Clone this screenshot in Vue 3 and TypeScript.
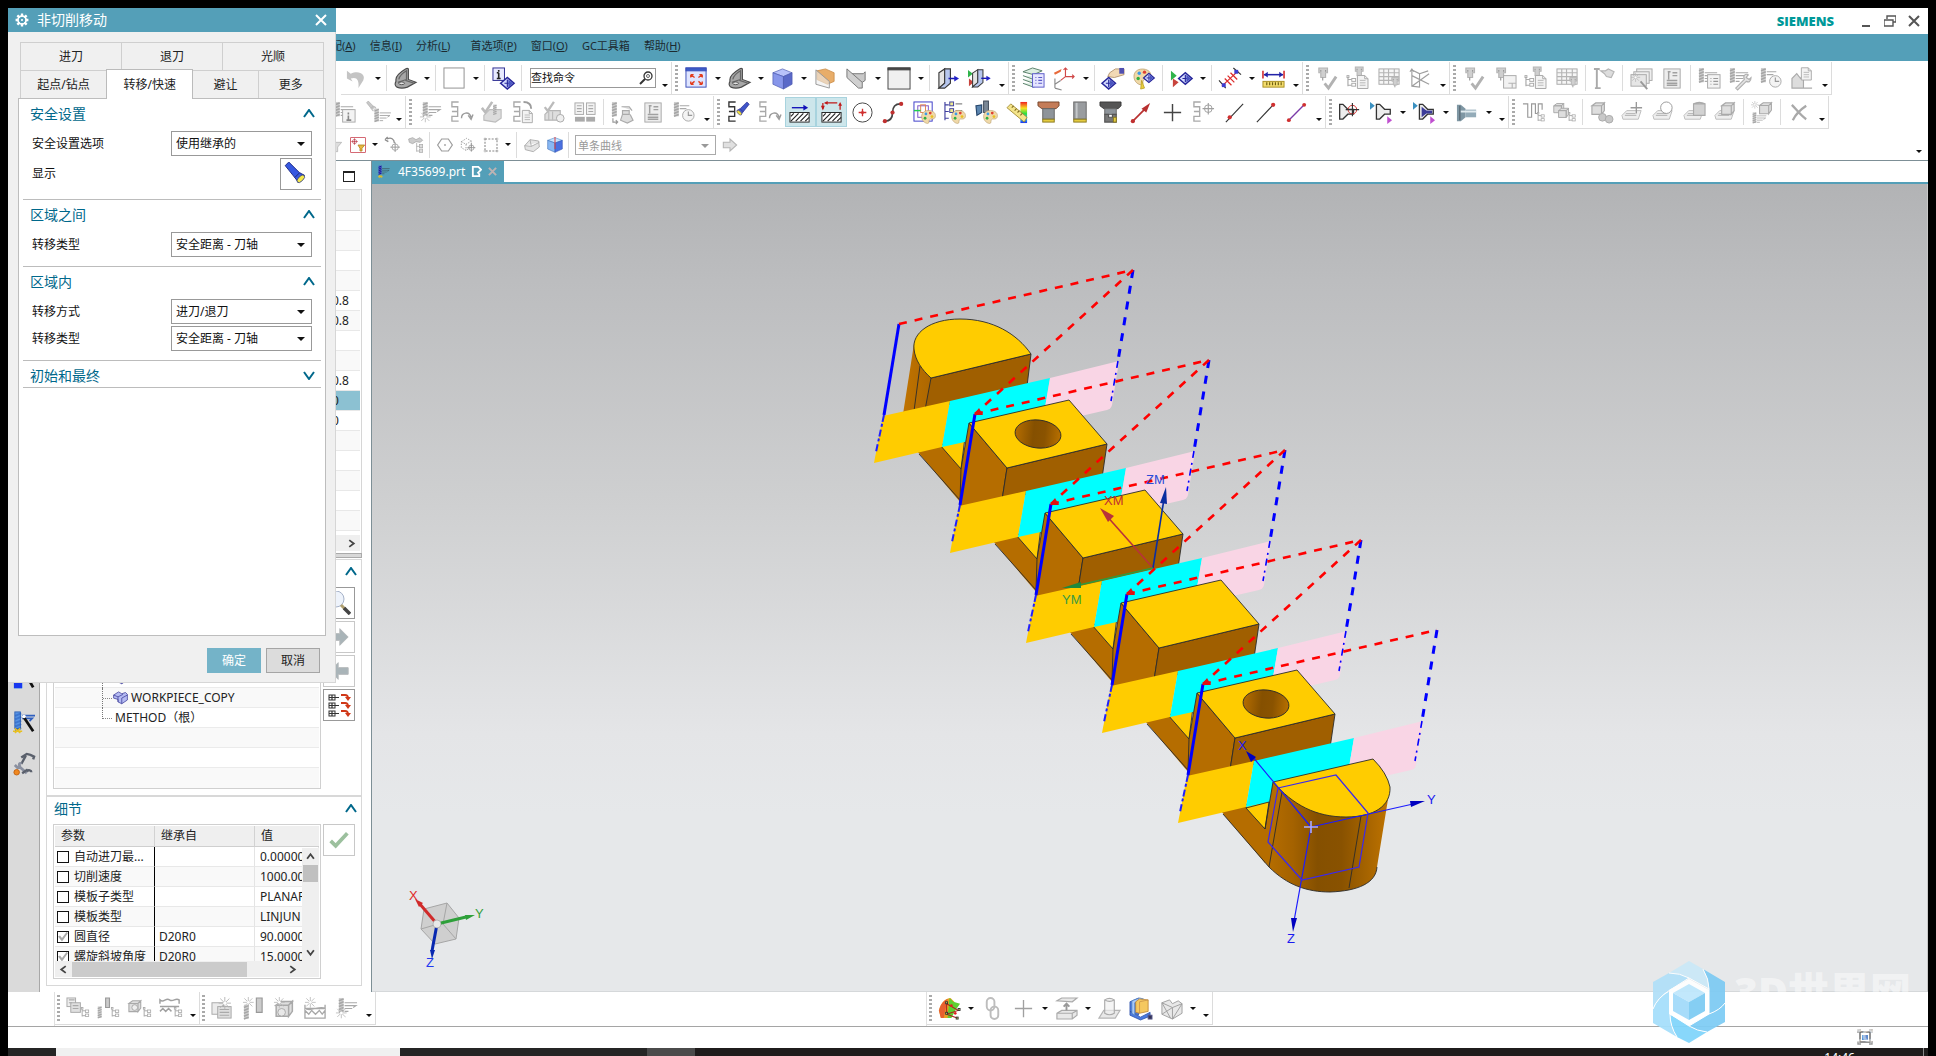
<script setup lang="ts">
import { ref } from 'vue'

type Item = string

// --- SVG building blocks for the toolbar glyphs (24 x 24 grid) ---
const G = '#a9a9a9'
const L = '#dcdcdc'
const p = (d: string, s = G, f = 'none', w = 1.2) =>
  `<path d="${d}" stroke="${s}" fill="${f}" stroke-width="${w}"/>`
const r = (x: number, y: number, w: number, h: number, f = L, s = G) =>
  `<rect x="${x}" y="${y}" width="${w}" height="${h}" fill="${f}" stroke="${s}"/>`
const c = (x: number, y: number, q: number, f = 'none', s = G) =>
  `<circle cx="${x}" cy="${y}" r="${q}" fill="${f}" stroke="${s}"/>`
const at = (x: number, y: number, k: number, m: string) =>
  `<g transform="translate(${x} ${y}) scale(${k})">${m}</g>`

const mill = (a = '#a6a6a6', b = '#cfcfcf') =>
  r(1, 1, 5, 15, b, 'none') + p('M1 4l5-2M1 7l5-2M1 10l5-2M1 13l5-2M1 16l5-2', a, 'none', 1.6)
const fins = (s = G) => p('M7 6h13M7 9h12l-3 2M7 12h8M7 15h4', s, 'none', 1.1)
const tool = mill() + fins()
const tree = p('M1 0v11M1 4h4M1 10h4', G) + r(0, 0, 2, 2, '#fff') + r(5, 3, 4, 3, '#fff') + r(5, 8, 4, 3, '#fff')
const snake = (s = G) => p('M9 1H2v5h6v5H2M8 11v5H2v5h7', s, 'none', 1.4)
const redo = p('M1 8c0-6 8-8 10-1M8 5l3 4 2-5', '#9c9c9c', 'none', 1.5)
const doc = p('M1 1h9l4 4v12H1zM10 1v4h4', G, '#f3f3f3') + p('M4 7h7M4 10h7M4 13h7', '#b8b8b8')
const clock = c(7, 7, 6, '#f4f4f4') + p('M7 3v4h4', '#999')
const check = (s = '#b2b2b2') => p('M1 8l4 5L13 1', s, 'none', 3)
const spindle = p('M3 1h9v5h-2v5H5V6H3z', '#b5b5b5', '#cfcfcf') + p('M7 11v3M5 3v2M10 3v2', '#999')
const box = p('M1 5l4-3h9l-3 3zM1 5h10v9H1zM11 5l3-3v8l-3 4z', G, '#dedede')
const target = (s: string) => c(6, 6, 4, 'none', s) + p('M6 0v12M0 6h12', s)
const palette =
  p('M8 1C3 1 0 4 0 8c0 5 4 8 7 8 3 0 0-4 3-5 3 0 6 0 6-4 0-4-4-6-8-6z', '#b89c6a', '#f0d9a8', 0.7) +
  c(5, 5, 1.6, '#3a9be8', 'none') + c(10, 4, 1.6, '#e04030', 'none') + c(4, 10, 1.6, '#30b040', 'none') + c(12, 8, 1.6, '#e8c020', 'none')
const torch = (a: string, b: string, e: string) =>
  p('M1 3l3-3 9 9-4 4z', b, a, 0.8) + p('M9 13l4-4 4 2-5 6z', b, a, 0.8) + `<ellipse cx="14" cy="14" rx="4" ry="2" transform="rotate(-45 14 14)" fill="${e}" stroke="${b}" stroke-width=".6"/>`
const diamond = p('M0 8l7-6 7 6-7 6z', '#26269a', '#d5dcff', 1.6) + p('M7 4v8M4 8h6', '#26269a') + p('M8 4l5 4-5 4z', 'none', '#4a55c0')
const star = p('M8 0v16M0 8h16M2 2l12 12M14 2L2 14', '#b5b5b5', 'none', 1.2) + c(8, 8, 2, '#fff', 'none')
const grid = r(1, 2, 21, 16, '#f6f6f6') + p('M1 6h21M1 10h21M1 14h21M6 2v16M11 2v16M17 2v16', '#b5b5b5')
const tag = p('M1 15l5-5h15l-3 9H2z', '#bdbdbd', '#eee', 1) + p('M4 15h12M5 13h10', '#bbb')
const plane = p('M2 6l6-4v15l-6 5z', '#3a3a3a', '#e4e4e4') + p('M8 2h6v15l-6 5H2l6-5z', '#3a3a3a', '#b7c7ee') + p('M12 12h7', '#1a1ab0', 'none', 1.6) + p('M18 9l5 3-5 3z', 'none', '#2222c8')
const holder = p('M2 3h4l6 6h7v6h-7l-6 6H2z', '#333', '#ededed', 1.6)

const icons: Record<string, string> = {
  undo: p('M2 12L2 4l4 3c9-4 16 1 13 7l-5 8c1-9-2-12-8-10l2 3z', 'none', '#c4c4c4'),
  part: p('M2 13Q2 8 12 2q2-1 3 0v11l8 3-9 5q-6 2-11 0-3-2-1-6z', '#4b4b4b', '#a7a7a7') + p('M5 13Q6 8 13 4v9l-9 3M12 14l9 3', '#666') + '<ellipse cx="8" cy="17" rx="3" ry="1.4" fill="#e4e4e4" stroke="#555"/>',
  blank: r(1, 1, 21, 21, '#fff', '#8f8f8f'),
  info: r(1, 1, 12, 13, '#e8eaff', '#2a2a90') + p('M7 3v2M7 6v6M5 6h2M5 12h4', '#222', 'none', 1.7) + at(9, 9, 1, diamond),
  fit: r(1, 1, 21, 20, '#dfe5ff', '#3b4fb8') + r(1, 1, 21, 3, '#3b5cc8', '#3b4fb8') + p('M6 8l4 3M6 8h3M6 8v3M18 8l-4 3M18 8h-3M18 8v3M6 18l4-3M6 18h3M6 18v-3M18 18l-4-3M18 18h-3M18 18v-3', '#e33b1c', 'none', 1.4),
  cube: p('M2 6l10-4 10 4-9 4z', '#4b59b0', '#b8c2fa', 0.7) + p('M2 6l11 4v13L2 18z', '#4b59b0', '#8796ea', 0.7) + p('M13 10l9-4v12l-9 5z', '#4b59b0', '#5a69c8', 0.7),
  orangePlane: p('M3 4l9-2 9 4v9l-7 3L3 13z', '#c98b45', '#e8ad69', 0.8) + p('M2 3l14 12v7L2 18z', '#999', '#ececec99', 1),
  grayPlane: p('M6 7h13l2-2v9l-3 2H12z', '#777', '#c9c9c9', 1) + p('M2 2l16 14v6h-4L2 11z', '#777', '#d0d0d0', 1),
  window: r(0, 1, 23, 22, '#f0f0f0', '#444') + r(0, 1, 23, 2, '#444', '#444'),
  clip: plane,
  clipEdit: p('M0 3l5 4-5 4z', 'none', '#2fb34a') + p('M1 12l5 4-5 4z', 'none', '#c8443c') + at(3, 1, 0.9, plane),
  layers: p('M1 5l10-4 10 3-9 4zM1 9l11 4 9-4M1 13l11 4 9-4M1 17l11 4 9-4', '#59806a', '#dceee2', 1) + r(11, 7, 12, 14, '#e6e6ff', '#5a5ac8') + p('M14 11h1M17 11h4M14 14h1M17 14h4M14 17h1M17 17h4', '#5a5ac8'),
  csys: p('M13 10V1M13 10h9M13 10l-5 4M11 3l2-2 2 2M20 8l2 2-2 2', '#d04848') + p('M2 22V12M2 22l7 2M2 18l6-4', '#8a8a8a') + p('M1 6l8-4-1 3-6 3z', 'none', '#e86a3a'),
  handTool: p('M8 6l6-4h9v6l-10 3-7-1z', '#a5835a', '#f2d9b5', 0.8) + p('M18 1h5v6h-5z', 'none', '#5050b0') + at(0, 9, 1, diamond),
  paletteTool: at(1, 1, 1.1, palette) + at(11, 5, 0.8, diamond) + p('M9 14l3 8-4 1z', '#b89c20', '#e8d040', 0.8),
  play2: p('M1 4l6 5-6 5z', 'none', '#2fb34a') + p('M3 12l6 4-6 5z', 'none', '#c8443c') + at(9, 4, 1, diamond),
  measure: p('M3 20l17-16M6 12l7 7M9 9l7 7M12 6l7 7', '#dd2b2b', 'none', 1.3) + p('M0 14l7 8M15 1l8 7', '#333') + r(3, 17, 4, 4, '#3c3cd0', 'none') + r(16, 3, 4, 4, '#3c3cd0', 'none'),
  ruler: p('M1 4v8M23 4v8', '#d01818', 'none', 1.5) + p('M2 8h20', '#2222a8', 'none', 1.6) + p('M6 5L2 8l4 3zM18 5l4 3-4 3z', 'none', '#2222a8') + r(1, 15, 22, 6, '#f3dc6c', '#a88e20') + p('M5 16v3M8 16v3M11 16v3M14 16v3M17 16v3M20 16v3', '#6b5c10'),
  verify: spindle + at(8, 9, 1, check()),
  treeDoc: at(6, -1, 0.9, spindle) + at(0, 9, 1, tree) + at(10, 8, 0.85, doc),
  gridTool: grid + at(12, 10, 0.8, spindle),
  wire: p('M3 20V3l8 4v14zM3 9l18 9M11 7l9-3M3 20l18-13M1 5l2-3 2 3', '#9f9f9f'),
  holderDoc: spindle + r(10, 9, 13, 13, '#f2f2f2') + p('M15 17h8M19 17v5', '#b5b5b5'),
  flag: p('M4 2v20M2 22h6M1 2h6', '#aaa', 'none', 2) + p('M8 4h5l3-2 6 3-3 6-5-1-2-3z', '#b5b5b5', '#ddd'),
  cards: r(7, 2, 16, 12, '#eee') + r(4, 5, 16, 12, '#eee') + r(1, 8, 16, 12, '#e6e6e6') + at(1, 6, 0.6, star) + p('M11 15l7 8', '#999', 'none', 2),
  report: r(3, 2, 17, 20, '#ededed') + p('M8 5v8M7 5h3M12 6h5M12 9h5M6 14h11M6 17h11M6 19h11', '#a0a0a0', 'none', 1.5),
  toolList: tool + r(10, 8, 13, 14, '#f3f3f3') + p('M13 12h1M16 12h5M13 15h1M16 15h5M13 18h1M16 18h5', '#999'),
  toolWrench: tool + p('M7 22l9-9c-2-5 2-6 4-5l-2 3 3 2 2-2c0 5-3 5-5 4l-9 9z', '#b0b0b0', '#e3e3e3'),
  toolClock: mill() + p('M7 5h10M7 8h7', G) + at(9, 8, 1, clock),
  machineDoc: p('M1 22V12l5-5 4 5 3-5v15zM3 22h19', '#aaa', '#ddd') + at(10, 0, 0.8, doc),
  toolInfo: tool + r(9, 9, 13, 13, '#f3f3f3') + p('M15 12v2M15 15v5M13 20h5', '#888', 'none', 1.7),
  toolTorch: at(1, 0, 0.6, torch('#c8c8c8', '#999', '#eee')) + at(9, 7, 0.9, tool),
  toolNew: at(3, 0, 1, tool) + at(1, 11, 0.7, star),
  snakeRedo: snake() + at(11, 10, 1, redo),
  checkPart: p('M3 15l6-6h12v9l-6 4-12-2z', '#bdbdbd', '#dcdcdc') + at(0, 0, 0.9, check('#bbb')) + at(12, 3, 0.7, mill()),
  snakeDoc: snake() + p('M12 1c6 0 8 3 8 7', '#9c9c9c', 'none', 2) + at(10, 9, 0.8, doc),
  checkMachine: p('M2 14l4-4h12v10H2z', '#b5b5b5', '#dedede') + at(1, 0, 0.8, check('#bbb')) + c(18, 18, 4, '#eee') + p('M6 11v9M10 11v9', '#bbb'),
  compare: r(1, 2, 9, 12, '#f3f3f3') + r(13, 2, 9, 12, '#f3f3f3') + p('M3 5h5M3 8h5M3 11h5M15 5h5M15 8h5M15 11h5', '#aaa') + p('M1 19h21', '#aaa', 'none', 5) + p('M12 16v6', '#fff', 'none', 1.5),
  post: mill() + p('M11 6h8l3 4M12 10h7v4h-7zM12 14l-2 6 7 3 6-3-3-6', '#aaa', '#ddd') + p('M2 18v4h5M5 20l2 2-2 2', '#999'),
  toolpath: snake('#333') + `<g transform="translate(24 1) scale(-.8 .8)">${torch('#3f55c8', '#26268a', '#f0e040')}</g>`,
  hatch: r(1, 12, 20, 10, '#fff', '#222') + p('M2 21l8-8M7 21l8-8M12 21l8-8M17 21l4-4M2 16l3-3', '#222') + p('M3 7h14', '#1010b8', 'none', 1.4) + p('M15 4l5 3-5 3z', 'none', '#1010b8'),
  hatchRed: r(2, 12, 20, 10, '#fff', '#222') + p('M3 21l8-8M8 21l8-8M13 21l8-8M18 21l4-4M3 16l3-3', '#222') + p('M3 8V2M6 2h12M21 9V4', '#c01818', 'none', 1.3) + p('M1 5l2 5 2-5zM8 0L4 2l4 2zM19 5l2-4 2 4z', 'none', '#c01818'),
  circle: c(12, 12, 10, 'none', '#444') + p('M12 8v8M8 12h8', '#d03030', 'none', 1.4) + c(12, 12, 1.6, '#d03030', 'none'),
  curve: p('M3 21c6 0 8-3 8-9s3-9 8-9', '#444', 'none', 1.8) + c(3, 21, 2.2, '#c03030', 'none') + c(11, 12, 2.2, '#c03030', 'none') + c(20, 3, 2.2, '#c03030', 'none'),
  pathPalette: r(1, 1, 19, 20, '#fff', '#3a3ac8') + r(5, 5, 11, 12, 'none', '#7a50c8') + r(8, 4, 5, 8, 'none', '#e08050') + p('M1 10h7', '#20d050', 'none', 1.5) + at(9, 9, 0.9, palette),
  treePalette: p('M1 1v19M1 4h4M1 11h4M1 18h4', '#4040a0') + r(6, 1, 4, 4, '#f0ec90', '#4040a0') + r(6, 8, 4, 4, '#f0ec90', '#4040a0') + p('M12 3h7M12 10h7', '#888') + at(8, 9, 0.9, palette),
  millPalette: r(9, 0, 5, 12, '#7a8796', '#3d4654') + p('M1 5l6-1v8l-5 3z', '#26466c', '#5c86b0') + at(9, 9, 0.9, palette),
  rainbow: '<defs><linearGradient id="rainbowBar" x1="0" y1="0" x2="0" y2="1"><stop offset="0" stop-color="#f02020"/><stop offset=".3" stop-color="#f8e020"/><stop offset=".55" stop-color="#30e040"/><stop offset=".8" stop-color="#20c0f0"/><stop offset="1" stop-color="#2030f0"/></linearGradient></defs><rect x="15" y="1" width="7" height="22" fill="url(#rainbowBar)"/>' + p('M1 7l4-4 17 14-3 5z', '#a08830', '#f4e48a', 0.9) + p('M6 7l2-2M9 10l2-2M12 12l2-2M15 15l2-2', '#806c20'),
  holderBrown: p('M1 1h22v4l-3 3H5L1 5z', '#6c3c22', '#c47c58', 0.9) + r(6, 8, 12, 11, '#8e949a', '#666') + r(6, 19, 12, 3, '#e6cc40', '#8a7a20'),
  cylinderTool: r(6, 1, 13, 18, '#999c9f', '#6a6a6a') + p('M9 2v16', '#c5c8ca', 'none', 2) + r(6, 19, 13, 3, '#e6cc40', '#8a7a20'),
  holderBlack: p('M1 1h22v4l-3 3H5L1 5z', '#333', '#555', 0.9) + r(6, 8, 12, 6, '#8e949a', '#666') + p('M6 14h4v3h4v-3h4v8H6z', '#555', '#777') + r(15, 17, 3, 5, '#e6cc40', '#8a7a20'),
  vector: p('M3 21L17 7', '#b83030', 'none', 1.8) + p('M12 8l9-6-4 10z', 'none', '#b83030') + c(3, 21, 2.2, '#c03030', 'none'),
  plus: p('M12 3v18M3 12h18', '#444', 'none', 1.5),
  snakeTarget: snake() + at(11, 2, 1, target('#a0a0a0')),
  lineA: p('M3 22L21 3', '#333', 'none', 1.2) + c(7, 17, 2.2, '#d03030', 'none'),
  lineB: p('M3 22L21 3', '#333', 'none', 1.2) + c(20, 4, 2.2, '#d03030', 'none'),
  lineC: p('M4 20L20 4', '#7a3aa8', 'none', 1.4) + c(4, 20, 2, '#d03030', 'none') + c(20, 4, 2, '#d03030', 'none'),
  holderTarget: at(-1, 1, 0.85, holder) + c(14, 9, 4.5, 'none', '#d03030') + p('M14 2v14M7 9h14', '#333'),
  holderPlain: p('M0 1l5 4-5 4z', 'none', '#3a90c0') + at(5, 1, 0.85, holder) + p('M18 16l5 4-5 4z', 'none', '#c050d0'),
  holderBlue: p('M0 1l5 4-5 4z', 'none', '#3a90c0') + at(5, 1, 0.85, holder) + p('M9 6l5 4h6v3h-6l-5 4z', 'none', '#3c3c98') + p('M18 16l5 4-5 4z', 'none', '#c050d0'),
  holderSteel: p('M1 4h4l5 4v9l-5 4H1z', 'none', '#7f97a4') + p('M10 9h11v8H10z', 'none', '#93abb8') + p('M4 5v15', '#5a6a74', 'none', 1.4) + p('M5 11h16', '#e2ecf0', 'none', 2),
  hatchTree: p('M1 3h5v14h4V3h4v10h3V3h4v6', '#999', 'none', 1.2) + at(16, 12, 0.8, tree),
  boxesTree: at(0, 1, 0.8, box) + at(5, 6, 0.8, box) + at(16, 12, 0.8, tree),
  boxFind: at(1, 0, 1, box) + c(13, 17, 4, '#c8c8c8') + c(20, 19, 4, '#c8c8c8'),
  tagPlus: tag + p('M16 1v12M10 7h12', '#999', 'none', 1.4),
  tagCircle: tag + c(15, 7, 6, '#fff', '#999'),
  tagCyl: tag + p('M11 3h12v12H11zM11 3q6-3 12 0', '#aaa', '#d2d2d2'),
  tagBox: tag + at(7, 0, 1, box),
  boxTool: at(8, 0, 0.95, box) + at(0, 0, 0.5, star) + at(1, 11, 0.75, tool),
  cross: p('M4 4c5 5 9 11 15 15M19 5C13 9 8 14 5 20', '#a9a9a9', 'none', 2.4),
  stockTree: r(1, 1, 9, 9, '#eee') + r(5, 6, 10, 10, '#e0e0e0') + p('M3 3h6M3 6h3M7 9h6M7 12h6', '#aaa') + at(16, 11, 0.85, tree),
  millTree: p('M9 1h4v10h-4z', '#999', '#ccc') + at(0, 9, 0.8, mill()) + at(15, 11, 0.85, tree),
  camTree: at(0, 2, 0.95, box) + c(7, 11, 3, '#eee') + at(16, 11, 0.85, tree),
  cutTree: p('M1 7V3c4 4 6-3 10 0s6-3 10 0v4M1 10h20M1 15l3-3 3 3 3-3 3 3', '#a0a0a0', 'none', 1.5) + at(16, 11, 0.85, tree),
  stockNew: r(1, 6, 12, 12, '#ececec') + r(7, 10, 14, 12, '#dedede') + p('M9 13h10M9 16h10M9 19h10', '#aaa') + at(8, 0, 0.8, star),
  millNew: p('M15 1h6v15h-6z', '#999', '#ccc') + at(1, 7, 1, mill()) + at(1, 0, 0.7, star),
  camNew: at(2, 2, 1.3, box) + c(9, 16, 4, '#e8e8e8') + at(1, 0, 0.7, star),
  cutNew: p('M1 8v4h21V8M1 22V14l4 4 3-4 4 4 4-4 3 4 3-4v8zM1 12c6 4 16-4 21 0', '#a8a8a8', 'none', 1.4) + at(1, 0, 0.7, star),
  heat: p('M1 14C3 5 9 1 13 1l4 4-2 8-4 9H3z', 'none', '#e8a020') + p('M12 1l4 4 7 2-5 7-4 8h-4z', 'none', '#5ed030') + p('M1 14C3 6 7 3 10 2L6 22H3z', 'none', '#e86030') + p('M9 7v11l11 4M9 7l12 7-12 4', '#b02020', 'none', 1.1) + r(8, 5, 2, 2, '#fff060', '#333') + r(8, 16, 2, 2, '#fff060', '#333') + r(21, 12, 2, 2, '#fff060', '#333') + r(19, 21, 2, 2, '#fff060', '#333') + c(14, 9, 1.4, '#e02020', 'none') + c(18, 17, 1.4, '#e02020', 'none'),
  chain: '<rect x="6" y="1" width="8" height="13" rx="4" fill="none" stroke="#bdbdbd" stroke-width="2"/><rect x="10" y="10" width="8" height="13" rx="4" fill="none" stroke="#bdbdbd" stroke-width="2"/>',
  plusLight: p('M12 3v18M3 12h18', '#a0a0a0', 'none', 1.4),
  lift: p('M2 4l5-3h16l-5 4zM2 17l5-3h16v5l-5 4H2zM2 17h16v6M18 17l5-3', '#aaa', '#e8e8e8') + p('M12 14V8M9 10l3-3 3 3', '#999', 'none', 2),
  cylPlane: p('M1 22l5-8h17l-5 8z', '#b5b5b5', '#e8e8e8') + p('M7 3v14q5 3 10 0V3q-5-3-10 0q5 3 10 0', '#aaa', '#f0f0f0aa'),
  section: p('M1 5l9-4v18l-9-4zM1 15l11 6 10-5v4l-10 4-11-5z', '#2b50a8', '#4a7ae0', 0.8) + p('M3 4l8-3 4 1-9 4v13l-3-2z', '#5080c0', '#a8c8f8', 0.8) + p('M7 5l4-3 9 1v12l-9 2-4-1z', '#b88030', '#f5c860', 0.8) + p('M11 5v12M11 5l9-2', '#c89048', 'none', 0.8) + r(20, 19, 4, 4, '#335', '#558'),
  lattice: p('M2 6l8-3 3 4 6-3 4 3v10l-10 6-11-5zM2 6l11 5v12M13 11l10-4M2 18l11-7M13 23l10-16M2 6l9 16', '#a0a0a0', '#e8e8e8', 1),
  funnel: p('M4 8h18l-6 7v7h-4v-7z', '#b5b5b5', '#ddd') + c(6, 4, 3, '#ddd'),
  filter: r(1, 1, 22, 22, '#fff', '#c02030') + at(2, 2, 0.8, target('#b02030')) + p('M12 12h10l-4 5v4h-3v-4z', '#b08020', '#e8b840'),
  rotate: p('M3 3c6-3 11 0 11 6M0 4l4-4M0 4l5 3', '#8d8d8d', 'none', 2) + at(8, 8, 1.2, target('#999')),
  claw: p('M1 3l6-2 5 3 6-3 4 4-4 3-6-1-5 3-5-2z', '#aaa', '#ccc') + p('M13 9v13M13 14h6M13 21h6', '#aaa') + r(17, 11, 5, 5) + r(17, 18, 5, 5),
  hex: p('M7 3h10l6 9-6 9H7L1 12z', '#9c9c9c', 'none', 1.8) + c(12, 12, 1.5, '#aaa', 'none'),
  dashCube: p('M2 7l8-5 7 4v9l-8 5-7-4zM2 7l7 4 8-5M9 11v9', '#999', 'none', 1.4).replace('/>', ' stroke-dasharray="2 2"/>') + at(11, 10, 1, target('#888')),
  dashBox: p('M3 3h18v18H3z', '#888', 'none', 1.6).replace('/>', ' stroke-dasharray="3 2"/>') + c(3, 3, 1.5) + c(21, 3, 1.5) + c(3, 21, 1.5) + c(21, 21, 1.5),
  softBox: p('M1 13l8-9 13 2 1 9-9 7-12-3zM9 4l2 10M1 13l10 1 12-6', '#a8a8a8', '#e4e4e4', 1.3),
  colorCube: p('M1 5l11-4 11 4-11 4z', '#4080c8', '#c8e4ff', 0.8) + p('M1 5l11 4v14L1 18z', '#3060b0', '#88b8f4', 0.8) + p('M12 9l11-4v13l-11 5z', '#3050b0', '#4a70e0', 0.8) + p('M12 0v18', '#e04040', 'none', 1.5),
  arrow: p('M2 8h10V3l10 9-10 9v-5H2z', '#b5b5b5', '#e0e0e0', 1.6),
  lamp: torch('#3658e0', '#1c2a88', '#f4e84a'),
  gear: p('M12 1v5M12 18v5M1 12h5M18 12h5M4 4l4 4M16 16l4 4M4 20l4-4M16 8l4-4', '#fff', 'none', 4) + c(12, 12, 7, 'none', '#fff') + p('M12 5a7 7 0 1 0 .1 0', '#fff', 'none', 2.6) + c(12, 12, 1.8, '#fff', 'none'),
  zoom: c(9, 8, 8, '#eef3fb', '#a5b1c8') + p('M14 14l4 4', '#b0a070', 'none', 3) + p('M17 17l6 6', '#444', 'none', 3.5),
  next: p('M1 8h12V2l10 10-10 10v-6H1z', '#b5b9bb', '#a9b4b8'),
  prev: p('M23 8H11V2L1 12l10 10v-6h12z', '#b5b9bb', '#a9b4b8'),
  expand: [2, 10, 18].map((y) => r(2, y, 6, 5, '#fff', '#333') + p(`M5 ${y}v5M2 ${y + 2.5}h10`, '#333') + p(`M14 ${y}h4q3 0 3 3`, '#d03818', 'none', 1.8) + p(`M18 ${y + 2}h6l-3 4z`, 'none', '#d03818')).join(''),
  okCheck: p('M2 13l6 6L22 4', '#9cc09e', 'none', 4.5),
  millWand: at(1, 0, 1.3, mill('#1e50b0', '#6aa4ec')) + r(2, 1, 6, 18, '#4c8ae0aa', '#2e62b8') + p('M10 5h14M10 8h11l-3 3', '#3060c0', 'none', 1.8) + p('M12 7l10 15', '#111', 'none', 3) + p('M0 22h10M2 19l6 5M8 19l-6 5', '#e8c020', 'none', 1.6) + c(12, 6, 2, '#fff', 'none'),
  wandColor: '<rect x="1" y="1" width="9" height="20" fill="#28c8f0"/><rect x="1" y="14" width="9" height="7" fill="#1838f0"/>' + p('M14 6l8 14', '#111', 'none', 3),
  wrench: p('M9 5l6-4 4 1 4 2-1 3M14 3l-5 9', '#5a606c', 'none', 2.6) + p('M9 12c-2-2-3 1-1 3M2 13l3 3 3-2M6 14l9 8', '#8a90a0', 'none', 3) + c(4, 21, 3, '#f08820', '#c06010') + p('M10 22l6-4M15 20c2-2 5-1 5 1', '#5a606c', 'none', 2.6),
  blueBox: p('M1 8l8-5 5 3 6-2 3 3v9l-9 6-6-3v-4l-7-2z', '#3c3c98', '#b4baf2', 1.2) + p('M1 8l7 3 8-4M8 11v8M14 13l9-5M14 13v9', '#3c3c98'),
  miniTool: mill('#16168c', '#4a58d0') + fins('#3b5a66') + p('M0 20h8M2 17l4 5M6 17l-4 5', '#e8c020', 'none', 1.6),
}

// '|' separator, 'v' drop-down arrow, 'o' overflow arrow
const topA: Item[] = ['undo', 'v', '|', 'part', 'v', '|', 'blank', 'v', '|', 'info', '|']
const topGroups: Item[][] = [
  ['fit', 'v', 'part', 'v', 'cube', 'v', 'orangePlane', 'grayPlane', 'v', 'window', 'v', '|', 'clip', 'clipEdit', 'o'],
  ['layers', 'csys', 'v', '|', 'handTool', 'paletteTool', '|', 'play2', 'v', '|', 'measure', 'v', 'ruler', 'o'],
  ['verify', 'treeDoc', 'gridTool', 'wire', 'o'],
  ['verify', 'holderDoc', 'treeDoc', 'gridTool', '|', 'flag', '|', 'cards', 'report', '|', 'toolList', 'toolWrench', 'toolClock', 'machineDoc', 'o'],
]
const secondGroups: Item[][] = [
  ['toolInfo', 'toolTorch', 'o'],
  ['toolNew', 'snakeRedo', 'checkPart', 'snakeDoc', 'checkMachine', 'compare', '|', 'post', 'report', 'toolClock', 'o'],
  ['toolpath', 'snakeRedo', 'hatch', 'hatchRed', 'circle', 'curve', 'pathPalette', 'treePalette', 'millPalette', 'rainbow', 'holderBrown', 'cylinderTool', 'holderBlack', 'vector', 'plus', 'snakeTarget', 'lineA', 'lineB', 'lineC', 'o'],
  ['holderTarget', 'holderPlain', 'v', 'holderBlue', 'v', 'holderSteel', 'v', 'o'],
  ['hatchTree', 'boxesTree', '|', 'boxFind', 'tagPlus', 'tagCircle', 'tagCyl', 'tagBox', '|', 'boxTool', '|', 'cross', 'o'],
]
const thirdItems: Item[] = ['funnel', 'filter', 'v', 'rotate', 'claw', '|', 'hex', 'dashCube', 'dashBox', 'v', '|', 'softBox', 'colorCube', '|']
const bottomLeft: Item[][] = [
  ['stockTree', 'millTree', 'camTree', 'cutTree', 'o'],
  ['stockNew', 'millNew', 'camNew', 'cutNew', 'toolNew', 'o'],
]
const bottomMid: Item[] = ['heat', 'v', 'chain', 'plusLight', 'v', 'lift', 'v', 'cylPlane', 'section', 'lattice', 'v', 'o']
const pressed = new Set(['hatch', 'hatchRed'])

const menus = [
  { text: '装配', key: 'A' }, { text: '信息', key: 'I' }, { text: '分析', key: 'L', wide: true },
  { text: '首选项', key: 'P' }, { text: '窗口', key: 'O' }, { text: 'GC工具箱', key: '' }, { text: '帮助', key: 'H' },
]

const navRows = ['', '', '', '', '0.8', '0.8', '', '', '0.8', '0', '0', '', '', '', '', '']
const selectedRow = 9

const details = ref([
  { on: false, name: '自动进刀最...', from: '', value: '0.00000' },
  { on: false, name: '切削速度', from: '', value: '1000.000' },
  { on: false, name: '模板子类型', from: '', value: 'PLANAR' },
  { on: false, name: '模板类型', from: '', value: 'LINJUN' },
  { on: true, name: '圆直径', from: 'D20R0', value: '90.00000' },
  { on: true, name: '螺旋斜坡角度', from: 'D20R0', value: '15.0000' },
])

const command = ref('查找命令')
const safety = ref('使用继承的')
const between = ref('安全距离 - 刀轴')
const method = ref('进刀/退刀')
const within = ref('安全距离 - 刀轴')
const stations = [0, 1, 2, 3, 4]
</script>

<template>
  <div class="screen">
    <header class="titlebar">
      <span class="brand">SIEMENS</span>
      <button class="win" aria-label="最小化"><svg viewBox="0 0 12 12"><path d="M2 11h8" stroke="#555" stroke-width="2" /></svg></button>
      <button class="win" aria-label="还原"><svg viewBox="0 0 12 12"><path d="M3 4V1h9v6H9M0 5h9v6H0z" fill="none" stroke="#555" stroke-width="1.4" /></svg></button>
      <button class="win" aria-label="关闭"><svg viewBox="0 0 12 12"><path d="M1 1l10 10M11 1L1 11" stroke="#555" stroke-width="2" /></svg></button>
    </header>

    <nav class="menubar">
      <a v-for="m in menus" :key="m.text" href="#" :class="{ wide: m.wide }">{{ m.text }}<template v-if="m.key">(<u>{{ m.key }}</u>)</template></a>
    </nav>

    <div class="toolrow first">
      <div class="group nogrip">
        <template v-for="(t, i) in topA" :key="i">
          <i v-if="t === '|'" class="sep"></i>
          <i v-else-if="t === 'v'" class="drop"></i>
          <button v-else class="tool" :aria-label="t"><svg viewBox="0 0 24 24" v-html="icons[t]"></svg></button>
        </template>
        <div class="search">
          <input v-model="command" type="text" aria-label="查找命令" />
          <svg viewBox="0 0 14 14"><circle cx="9" cy="5" r="4" fill="none" stroke="#333" stroke-width="1.3" /><circle cx="9" cy="5" r="1.5" fill="none" stroke="#666" /><path d="M6 8l-5 5" stroke="#333" stroke-width="2" /></svg>
        </div>
        <i class="drop over"></i>
      </div>
      <div v-for="(g, gi) in topGroups" :key="gi" class="group">
        <template v-for="(t, i) in g" :key="i">
          <i v-if="t === '|'" class="sep"></i>
          <i v-else-if="t === 'v'" class="drop"></i>
          <i v-else-if="t === 'o'" class="drop over"></i>
          <button v-else class="tool" :aria-label="t"><svg viewBox="0 0 24 24" v-html="icons[t]"></svg></button>
        </template>
      </div>
    </div>

    <div class="toolrow second">
      <div v-for="(g, gi) in secondGroups" :key="gi" class="group" :class="{ nogrip: gi === 0 }">
        <template v-for="(t, i) in g" :key="i">
          <i v-if="t === '|'" class="sep"></i>
          <i v-else-if="t === 'v'" class="drop"></i>
          <i v-else-if="t === 'o'" class="drop over"></i>
          <button v-else class="tool" :class="{ pressed: pressed.has(t) }" :aria-label="t"><svg viewBox="0 0 24 24" v-html="icons[t]"></svg></button>
        </template>
      </div>
    </div>

    <div class="toolrow third">
      <template v-for="(t, i) in thirdItems" :key="i">
        <i v-if="t === '|'" class="sep"></i>
        <i v-else-if="t === 'v'" class="drop"></i>
        <button v-else class="tool small" :aria-label="t"><svg viewBox="0 0 24 24" v-html="icons[t]"></svg></button>
      </template>
      <div class="combo rule"><select disabled aria-label="曲线规则"><option>单条曲线</option></select></div>
      <button class="tool small" aria-label="arrow"><svg viewBox="0 0 24 24" v-html="icons.arrow"></svg></button>
      <i class="drop over far"></i>
    </div>

    <main class="main">
      <aside class="resource">
        <button class="res" aria-label="wandColor"><svg viewBox="0 0 24 24" v-html="icons.wandColor"></svg></button>
        <button class="res" aria-label="millWand"><svg viewBox="0 0 24 24" v-html="icons.millWand"></svg></button>
        <button class="res" aria-label="wrench"><svg viewBox="0 0 24 24" v-html="icons.wrench"></svg></button>
      </aside>

      <section class="dock">
        <div class="dockhead"><button class="max" aria-label="最大化"></button></div>
        <div class="navigator">
          <table>
            <thead><tr><th></th><th></th></tr></thead>
            <tbody>
              <tr v-for="(v, i) in navRows" :key="i" :class="{ selected: i === selectedRow }"><td></td><td>{{ v }}</td></tr>
            </tbody>
          </table>
          <div class="hbar"><svg viewBox="0 0 8 8"><path d="M2 1l4 3-4 3" fill="none" stroke="#444" stroke-width="1.6" /></svg></div>
        </div>
        <div class="splitter"></div>

        <div class="panel relations">
          <div class="panelhead"><span></span><svg class="chev" viewBox="0 0 12 9"><path d="M1 8l5-7 5 7" fill="none" stroke="#00688b" stroke-width="2" /></svg></div>
          <div class="panelbody">
            <ul class="tree">
              <li></li><li></li><li></li><li></li>
              <li class="child"><svg viewBox="0 0 24 24" v-html="icons.blueBox"></svg></li>
              <li class="child"><svg viewBox="0 0 24 24" v-html="icons.blueBox"></svg>WORKPIECE_COPY</li>
              <li class="child last">METHOD（根）</li>
              <li></li><li></li><li></li>
            </ul>
            <div class="side">
              <button aria-label="zoom"><svg viewBox="0 0 24 24" v-html="icons.zoom"></svg></button>
              <button class="dim" aria-label="next"><svg viewBox="0 0 24 24" v-html="icons.next"></svg></button>
              <button class="dim" aria-label="prev"><svg viewBox="0 0 24 24" v-html="icons.prev"></svg></button>
              <button aria-label="expand"><svg viewBox="0 0 24 24" v-html="icons.expand"></svg></button>
            </div>
          </div>
        </div>

        <div class="panel details">
          <div class="panelhead"><span>细节</span><svg class="chev" viewBox="0 0 12 9"><path d="M1 8l5-7 5 7" fill="none" stroke="#00688b" stroke-width="2" /></svg></div>
          <div class="panelbody">
            <div class="grid">
              <div class="gridview">
                <table>
                  <thead><tr><th>参数</th><th>继承自</th><th>值</th></tr></thead>
                  <tbody>
                    <tr v-for="d in details" :key="d.name">
                      <td><label><input v-model="d.on" type="checkbox" />{{ d.name }}</label></td>
                      <td>{{ d.from }}</td>
                      <td>{{ d.value }}</td>
                    </tr>
                  </tbody>
                </table>
                <div class="vbar">
                  <svg viewBox="0 0 8 8"><path d="M1 6l3-4 3 4" fill="none" stroke="#444" stroke-width="1.6" /></svg>
                  <span></span>
                  <svg viewBox="0 0 8 8"><path d="M1 2l3 4 3-4" fill="none" stroke="#444" stroke-width="1.6" /></svg>
                </div>
              </div>
              <div class="hscroll">
                <svg viewBox="0 0 8 8"><path d="M6 1L2 4l4 3" fill="none" stroke="#444" stroke-width="1.6" /></svg>
                <span></span>
                <svg viewBox="0 0 8 8"><path d="M2 1l4 3-4 3" fill="none" stroke="#444" stroke-width="1.6" /></svg>
              </div>
            </div>
            <div class="side"><button class="dim" aria-label="应用"><svg viewBox="0 0 24 24" v-html="icons.okCheck"></svg></button></div>
          </div>
        </div>
      </section>

      <section class="document">
        <div class="doctabs">
          <div class="doctab">
            <svg class="tabicon" viewBox="0 0 24 24" v-html="icons.miniTool"></svg>
            <span>4F35699.prt</span>
            <svg class="edit" viewBox="0 0 12 12"><path d="M6 1H2v10h7V8M5 1h3l3 3-4 4" fill="none" stroke="#fff" stroke-width="2" /></svg>
            <button aria-label="关闭"><svg viewBox="0 0 10 10"><path d="M1 1l8 8M9 1L1 9" stroke="#bdb3b3" stroke-width="2.2" /></svg></button>
          </div>
        </div>
        <div class="viewport">
          <svg class="scene" viewBox="372 185 1555 807">
            <defs>
              <linearGradient id="hole" x1="0" x2="1"><stop offset="0" stop-color="#b56d00" /><stop offset=".4" stop-color="#855000" /><stop offset=".65" stop-color="#8a5300" /><stop offset="1" stop-color="#b87000" /></linearGradient>
              <linearGradient id="round" x1="0" x2="1"><stop offset="0" stop-color="#b56d00" /><stop offset=".2" stop-color="#a46200" /><stop offset=".4" stop-color="#855000" /><stop offset=".6" stop-color="#895200" /><stop offset="1" stop-color="#c07400" /></linearGradient>
              <linearGradient id="side" x1="0" x2="1"><stop offset="0" stop-color="#c07300" /><stop offset="1" stop-color="#ad6700" /></linearGradient>
            </defs>

            <g stroke="#2b2b2b" stroke-width=".9" stroke-linejoin="round">
              <path d="M914 345L903 415L930 410L931 379z" fill="url(#side)" stroke="none" />
              <path d="M931 379L1031 355L1027 387L925 411z" fill="#a05f00" />
              <path d="M920 367L914 412" fill="none" />
              <path d="M931 379L1031 355C1017 335 993 320 960 320C930 320 912 334 914 350C915 361 922 371 931 379z" fill="#ffcc00" />
            </g>

            <g v-for="s in stations" :key="s" :transform="`translate(${76 * s} ${90 * s})`">
              <g stroke="#2b2b2b" stroke-width=".9" stroke-linejoin="round">
                <path d="M917 452L942 445L964 468L961 504z" fill="#b56d00" stroke="none" />
                <path v-if="s < 4" d="M919 455L960 501" />
                <path d="M940 446L965 438L961 470z" fill="#ffcc00" />
              </g>
              <path d="M883 417L950 402L942 448L874 464z" fill="#ffcc00" />
              <path d="M950 402L1050 379L1042 426L942 448z" fill="#00ffff" />
              <path d="M1050 379L1119 362L1112 406Q1111 410 1107 411L1042 426z" fill="#f9d5e5" />
              <g stroke="#2b2b2b" stroke-width=".9" stroke-linejoin="round">
                <template v-if="s < 4">
                  <path d="M969 424L1007 469L1002 501L960 511L960 502L961 470z" fill="#b56d00" />
                  <path d="M1007 469L1107 445L1102 479L1002 501z" fill="#a05f00" />
                  <path d="M969 424L1069 401L1107 445L1007 469z" fill="#ffcc00" />
                  <ellipse v-if="s === 0 || s === 3" cx="1038" cy="435" rx="23" ry="14" transform="rotate(6 1038 435)" fill="url(#hole)" />
                </template>
                <template v-else>
                  <path d="M919 455L942 449L961 470L969 423L990 433L980 516L965 508z" fill="#b56d00" stroke="none" />
                  <path d="M919 455L965 508" />
                  <path d="M942 449L965 443L961 470z" fill="#ffcc00" />
                  <path d="M978 430L965 508C983 526 1003 533 1026 533C1054 532 1072 524 1073 508L1086 428z" fill="url(#round)" stroke="none" />
                  <path d="M969 423L961 470M978 433L965 508M1057 457L1045 529" fill="none" />
                  <path d="M965 508C983 526 1003 533 1026 533C1054 532 1072 524 1073 508" fill="none" />
                  <path d="M969 423L1069 400Q1083 414 1086 428C1087 447 1070 458 1042 458C1012 458 989 446 969 423z" fill="#ffcc00" />
                </template>
              </g>
            </g>

            <g v-for="s in stations" :key="'p' + s" :transform="`translate(${76 * s} ${90 * s})`" fill="none">
              <path d="M1133 271L1118 362" stroke="#0000ff" stroke-width="3" stroke-dasharray="8 8" />
              <path d="M1118 362L1111 402" stroke="#0000ff" stroke-width="1.6" stroke-dasharray="7 5 2 4" />
              <path d="M899 325L884 416" stroke="#0000ff" stroke-width="3" />
              <path d="M884 416L876 453" stroke="#2020ff" stroke-width="2" stroke-dasharray="7 2 3 3" />
              <path d="M899 325L1133 271" stroke="#ff0000" stroke-width="2.6" stroke-dasharray="8 8" />
              <path v-if="s < 4" d="M1133 271L975 415" stroke="#ff0000" stroke-width="2.6" stroke-dasharray="8 8" />
              <path v-if="s > 0" d="M898 326l5-7 4 7z" fill="#e01010" />
            </g>

            <g fill="none" stroke-width="1.6">
              <path d="M1153 569L1105 515" stroke="#b8323a" />
              <path d="M1100 509l14 8-6 6z" fill="#b8323a" />
              <path d="M1153 569L1164 500" stroke="#0a2ea0" />
              <path d="M1166 488l1 17-7-1z" fill="#0a2ea0" />
              <path d="M1153 569L1075 587" stroke="#2f9a3c" />
              <path d="M1062 589l19-6v6z" fill="#1f8a3c" />
              <path d="M1311 828L1252 757M1311 828L1413 805M1311 828L1294 922" stroke="#1c1cff" stroke-width="1.2" />
              <path d="M1246 752l10 6-5 5zM1425 802l-14 6-1-6zM1293 933l-2-14h6z" fill="#0000c0" />
              <path d="M1278 789L1336 776L1368 814L1359 868L1302 881L1268 843z" stroke="#3a28f0" stroke-width="1.2" />
              <path d="M1304 828h14M1311 822v12" stroke="#aaaaff" />
            </g>
            <g class="axis">
              <text x="1104" y="506" fill="#c03030">XM</text>
              <text x="1146" y="485" fill="#2a4bd8">ZM</text>
              <text x="1062" y="605" fill="#3a9a40">YM</text>
              <text x="1238" y="751" fill="#1a1af0">X</text>
              <text x="1427" y="805" fill="#1a1af0">Y</text>
              <text x="1287" y="944" fill="#1a1af0">Z</text>
              <text x="409" y="901" fill="#e02828">X</text>
              <text x="475" y="919" fill="#38a03c">Y</text>
              <text x="426" y="968" fill="#2038f0">Z</text>
            </g>

            <g stroke="#a6a6a6" fill="#cfcfcf">
              <path d="M424 910L447 904L459 919L456 940L435 945L421 930z" />
              <path d="M447 904L443 925L456 940M421 930L459 919" fill="none" />
            </g>
            <path d="M437 925L419 904" stroke="#d02a2a" stroke-width="3" />
            <path d="M415 900l8 4-4 4z" fill="#d02a2a" />
            <path d="M437 925L466 918" stroke="#2ea03a" stroke-width="3" />
            <path d="M475 916l-9 5-1-5z" fill="#2ea03a" />
            <path d="M437 925L432 952" stroke="#0828b0" stroke-width="3" />
            <path d="M432 960l-2-9h5z" fill="#0828b0" />
            <circle cx="437" cy="925" r="4" fill="#e8e8e8" stroke="#999" stroke-width=".6" />
          </svg>
        </div>
      </section>
    </main>

    <div class="bottombar">
      <div class="cluster left">
        <div v-for="(g, gi) in bottomLeft" :key="gi" class="group">
          <template v-for="(t, i) in g" :key="i">
            <i v-if="t === 'o'" class="drop over"></i>
            <button v-else class="tool" :aria-label="t"><svg viewBox="0 0 24 24" v-html="icons[t]"></svg></button>
          </template>
        </div>
      </div>
      <div class="cluster mid">
        <div class="group">
          <template v-for="(t, i) in bottomMid" :key="i">
            <i v-if="t === 'v'" class="drop"></i>
            <i v-else-if="t === 'o'" class="drop over"></i>
            <button v-else class="tool" :aria-label="t"><svg viewBox="0 0 24 24" v-html="icons[t]"></svg></button>
          </template>
        </div>
      </div>
    </div>
    <footer class="status">
      <svg viewBox="0 0 16 16"><path d="M1 4V1h3M12 1h3v3M15 12v3h-3M4 15H1v-3" fill="none" stroke="#999" stroke-width="1.4" /><rect x="3" y="3" width="10" height="10" fill="#fff" stroke="#666" stroke-width="1.4" /><rect x="5" y="6" width="6" height="5" fill="#5a8cd0" /></svg>
    </footer>
    <div class="taskbar"><span class="start"></span><span class="find"></span><span class="apps"></span><span class="running"></span><span class="rest"></span><time>14:46</time><span class="peek"></span></div>

    <div class="watermark">
      <svg viewBox="0 0 72 82">
        <path d="M36 0L50 8Q56 20 56 28L36 17Q26 12 16 12z" fill="#cbe8f7" />
        <path d="M50 8L72 21V42Q67 49 56 53V28Q56 18 50 8z" fill="#7fcbf3" />
        <path d="M72 42V61L54 71Q44 70 36 65L56 53Q67 49 72 42z" fill="#80cdf5" />
        <path d="M54 71L36 82L24 76Q17 65 17 53L36 65Q45 70 54 71z" fill="#82d5fb" />
        <path d="M24 76L0 62V48Q4 37 17 30V53Q17 66 24 76z" fill="#a6dffb" />
        <path d="M0 48V21L16 12Q27 12 36 17L17 29Q4 37 0 48z" fill="#b2e0f8" />
        <path d="M36 18L56 29V53L36 64L16 53V29z" fill="#fff" />
        <path d="M16 12Q27 12 36 17L56 28M50 8Q56 18 56 28V53M72 42Q67 49 56 53L36 65M54 71Q44 70 36 65L17 53M24 76Q17 65 17 53V29M0 48Q4 37 17 29L36 17" fill="none" stroke="#fff" />
        <path d="M36 23L52 32L36 41L20 32z" fill="#bfe7fc" /><path d="M20 32L36 41V59L20 50z" fill="#a3dbfa" /><path d="M52 32L36 41V59L52 50z" fill="#7fccf3" />
      </svg>
      <div class="wmtext"><strong>3D世界网</strong><span>WWW.3DSJW.COM</span></div>
    </div>

    <form class="dialog" @submit.prevent>
      <div class="dlgtitle"><svg viewBox="0 0 24 24" v-html="icons.gear"></svg><span>非切削移动</span><button type="button" aria-label="关闭"><svg viewBox="0 0 12 12"><path d="M1 1l10 10M11 1L1 11" stroke="#fff" stroke-width="2" /></svg></button></div>
      <div class="dlgbody">
        <div class="tabs upper"><button type="button">进刀</button><button type="button">退刀</button><button type="button">光顺</button></div>
        <div class="tabs lower"><button type="button" class="wider">起点/钻点</button><button type="button" class="wider active">转移/快速</button><button type="button">避让</button><button type="button">更多</button></div>
        <div class="sheet">
          <fieldset>
            <div class="head"><span>安全设置</span><svg class="chev" viewBox="0 0 12 9"><path d="M1 8l5-7 5 7" fill="none" stroke="#00688b" stroke-width="2" /></svg></div>
            <div class="row"><label for="safety">安全设置选项</label><div class="combo"><select id="safety" v-model="safety"><option>使用继承的</option></select></div></div>
            <div class="row tall"><span>显示</span><button type="button" class="lamp" aria-label="显示"><svg viewBox="0 0 20 20" v-html="icons.lamp"></svg></button></div>
          </fieldset>
          <fieldset>
            <div class="head"><span>区域之间</span><svg class="chev" viewBox="0 0 12 9"><path d="M1 8l5-7 5 7" fill="none" stroke="#00688b" stroke-width="2" /></svg></div>
            <div class="row"><label for="between">转移类型</label><div class="combo"><select id="between" v-model="between"><option>安全距离 - 刀轴</option></select></div></div>
          </fieldset>
          <fieldset>
            <div class="head"><span>区域内</span><svg class="chev" viewBox="0 0 12 9"><path d="M1 8l5-7 5 7" fill="none" stroke="#00688b" stroke-width="2" /></svg></div>
            <div class="row"><label for="method">转移方式</label><div class="combo"><select id="method" v-model="method"><option>进刀/退刀</option></select></div></div>
            <div class="row"><label for="within">转移类型</label><div class="combo"><select id="within" v-model="within"><option>安全距离 - 刀轴</option></select></div></div>
          </fieldset>
          <fieldset class="closed">
            <div class="head"><span>初始和最终</span><svg class="chev" viewBox="0 0 12 9"><path d="M1 1l5 7 5-7" fill="none" stroke="#00688b" stroke-width="2" /></svg></div>
          </fieldset>
        </div>
        <div class="actions"><button type="submit" class="ok">确定</button><button type="button">取消</button></div>
      </div>
    </form>
  </div>
</template>

<style>
body { background: #000; }
</style>

<style scoped>
* { box-sizing: border-box; }
.screen { position: relative; display: flex; flex-direction: column; height: 100vh; padding: 8px 8px 0; overflow: hidden; background: #000; color: #222; font: 12px/20px "Noto Sans", "Noto Sans CJK SC", sans-serif; }
button, input, select { margin: 0; padding: 0; border: 0; background: none; font: inherit; color: inherit; }
svg { display: block; flex: none; }

.titlebar { flex: none; display: flex; align-items: center; justify-content: flex-end; gap: 12px; height: 26px; padding-right: 8px; background: #fff; }
.brand { margin-right: 14px; color: #009999; font: 800 13px/20px "Open Sans", sans-serif; }
.win svg { width: 12px; height: 12px; }
.menubar { flex: none; display: flex; gap: 14px; height: 27px; padding-left: 312px; background: #549fb8; font-size: 11px; line-height: 24px; }
.menubar a { color: #1c2a30; text-decoration: none; white-space: nowrap; }
.menubar .wide { margin-right: 6px; }

.toolrow { flex: none; display: flex; height: 34px; background: #fff; padding-top: 1px; }
.group { display: flex; align-items: center; height: 33px; border-right: 1px solid #dcdcdc; border-bottom: 1px solid #dcdcdc; }
.group::before { content: ""; width: 3px; height: 26px; margin: 0 3px; background: repeating-linear-gradient(#aaa 0 2px, #fff 2px 4px); }
.cluster .group::before { margin: 0 2px; }
.group.nogrip::before { display: none; }
.first { padding-left: 333px; }
.second { padding-left: 322px; }
.third { height: 32px; padding: 0 3px 0 315px; align-items: center; border-bottom: 1px solid #7d8f96; }
.tool { flex: none; display: flex; align-items: center; justify-content: center; width: 31px; height: 30px; }
.tool svg { width: 23px; height: 23px; overflow: visible; }
.tool.small { width: 23px; }
.tool.small svg { width: 16px; height: 16px; }
.tool.pressed { background: #cde6eb; border: 1px solid #a8d3de; }
.sep { flex: none; width: 2px; height: 26px; margin: 0 2px; background: linear-gradient(90deg, #dcdcdc 50%, #fff 50%); }
.drop { flex: none; display: flex; justify-content: center; width: 12px; }
.drop::before { content: ""; border: 3px solid transparent; border-top-color: #111; border-bottom: 0; }
.drop.over { width: 13px; padding-top: 14px; }
.far { margin-left: auto; }
.search { display: flex; align-items: center; width: 126px; height: 20px; margin: 0 2px 0 5px; padding-right: 2px; border: 1px solid #999; }
.search input { flex: 1; width: 100px; color: #111; font-size: 11px; line-height: 16px; outline: none; }
.search svg { width: 14px; height: 14px; }

.combo { position: relative; width: 141px; height: 25px; border: 1px solid #999; background: #fff; }
.combo select { width: 100%; height: 100%; padding-left: 4px; appearance: none; outline: none; color: #111; opacity: 1; }
.combo::after { content: ""; position: absolute; right: 6px; top: 10px; border: 4px solid transparent; border-top-color: #111; border-bottom: 0; pointer-events: none; }
.combo.rule { height: 20px; margin: 0 2px 0 3px; border-color: #aaa; }
.combo.rule select { padding-left: 2px; color: #999; font-size: 11px; }
.combo.rule::after { top: 8px; border-top-color: #999; }

.main { flex: 1; display: flex; min-height: 0; background: #fff; }
.resource { flex: none; display: flex; flex-direction: column; align-items: center; gap: 16px; width: 32px; padding-top: 506px; background: #dadada; border-right: 1px solid #a8a8a8; }
.res { width: 26px; height: 26px; }
.res svg { width: 22px; height: 22px; margin: 2px; overflow: visible; }
.dock { flex: none; width: 331px; padding: 0 9px 0 6px; overflow: hidden; }
.dockhead { height: 28px; display: flex; justify-content: flex-end; align-items: center; padding-right: 7px; }
.max { width: 12px; height: 11px; border: 1px solid #222; border-top-width: 2px; margin-top: 2px; }
.navigator { height: 364px; border: 1px solid #d6d6d6; border-bottom: 0; padding-right: 1px; }
table { width: 100%; border-collapse: separate; border-spacing: 0; table-layout: fixed; }
.navigator th { height: 21px; background: #efefef; border-bottom: 1px solid #d8d8d8; }
.navigator th:last-child { width: 32px; }
.navigator td { height: 20px; padding: 0 0 0 4px; border-bottom: 1px solid #e8e8e8; line-height: 19px; }
tbody tr:nth-child(even) { background: #f9f9f9; }
tbody tr.selected { background: #8cc1d2; }
.hbar { display: flex; justify-content: flex-end; align-items: center; height: 16px; margin-top: 4px; padding-right: 4px; background: #efefef; }
.hbar svg, .hscroll svg, .vbar svg { width: 9px; height: 9px; }
.splitter { height: 5px; margin-bottom: 1px; background: #d8d8d8; border: 1px solid #aaa; }
.panel { border: 1px solid #d8d8d8; }
.relations { height: 237px; }
.details { height: 190px; }
.panelhead { display: flex; justify-content: space-between; align-items: center; height: 27px; padding: 0 4px 4px 7px; color: #00688b; font-size: 14px; }
.chev { width: 12px; height: 9px; }
.panelbody { display: flex; gap: 2px; padding-left: 6px; }
.tree { width: 268px; height: 202px; margin: 0; padding: 0 1px; border: 1px solid #d0d0d0; list-style: none; }
.tree li { position: relative; display: flex; align-items: center; gap: 3px; height: 20px; padding-left: 58px; border-bottom: 1px solid #ebebeb; line-height: 19px; }
.tree li:nth-child(even) { background: #f9f9f9; }
.tree li:last-child { border: 0; }
.tree svg { width: 15px; height: 15px; }
.tree .last { padding-left: 60px; }
.child::before { content: ""; position: absolute; left: 47px; top: 0; width: 9px; height: 20px; border-left: 1px dotted #777; background: repeating-linear-gradient(90deg, #888 0 1px, transparent 1px 2px) 0 10px / 9px 1px no-repeat; }
.child.last::before { height: 11px; }
.side { display: flex; flex-direction: column; gap: 2px; }
.side button { display: flex; align-items: center; justify-content: center; width: 32px; height: 32px; border: 1px solid #999; background: #fff; }
.side .dim { border-color: #c8c8c8; }
.side svg { width: 24px; height: 24px; }
.dim svg { width: 20px; height: 20px; }

.grid { width: 268px; height: 155px; padding: 1px; border: 1px solid #d0d0d0; }
.gridview { position: relative; height: 135px; overflow: hidden; }
.grid th { height: 21px; padding: 0 6px; background: #efefef; border-right: 1px solid #d2d2d2; border-bottom: 1px solid #cfcfcf; font-weight: 400; text-align: left; line-height: 20px; }
.grid th:first-child { width: 100px; }
.grid th:nth-child(2) { width: 100px; }
.grid th:last-child { border-right: 0; }
.grid td { height: 20px; padding: 0 0 0 4px; border-right: 1px solid #e4e4e4; border-bottom: 1px solid #e8e8e8; line-height: 19px; white-space: nowrap; overflow: hidden; }
.grid td:first-child { padding-left: 2px; border-right-color: #000; }
.grid td:last-child { padding-left: 5px; }
.grid label { display: flex; align-items: center; gap: 5px; }
.grid input { flex: none; display: block; width: 12px; height: 12px; appearance: none; border: 1px solid #111; background: #fff; }
.grid input:checked::before { content: ""; display: block; width: 10px; height: 10px; background: #aaa; clip-path: polygon(0 50%, 20% 40%, 40% 65%, 85% 5%, 100% 15%, 40% 100%); }
.vbar { position: absolute; right: 0; top: 22px; bottom: 0; display: flex; flex-direction: column; align-items: center; width: 17px; padding: 4px 0; background: #efefef; }
.vbar span { width: 15px; height: 17px; margin: 4px 0 auto; background: #c0c0c0; }
.hscroll { display: flex; align-items: center; height: 16px; padding: 0 22px 0 4px; background: #efefef; }
.hscroll span { width: 175px; height: 15px; margin: 0 auto 0 4px; background: #cbcbcb; }

.document { flex: 1; min-width: 0; display: flex; flex-direction: column; border-left: 1px solid #7d8f96; }
.doctabs { flex: none; height: 23px; border-bottom: 2px solid #549fb8; }
.doctab { display: flex; align-items: center; gap: 6px; width: 132px; height: 21px; padding-left: 6px; background: #549fb8; color: #fff; }
.tabicon { width: 14px; height: 14px; }
.edit { width: 11px; height: 11px; }
.doctab button svg { width: 9px; height: 9px; }
.viewport { flex: 1; min-height: 0; border-right: 1px solid #c8c8c8; border-bottom: 1px solid #d5d8da; background: linear-gradient(#b2b3b5 0%, #bcbdbf 12%, #cfd0d1 40%, #e4e5e7 68%, #e6e8ea 78%); }
.scene { width: 100%; height: 100%; }
.axis { font: 13px "Liberation Sans", sans-serif; }

.bottombar { flex: none; display: flex; height: 35px; padding-left: 46px; background: #fff; border-bottom: 1px solid #a5a5a5; }
.cluster { display: flex; height: 34px; border-left: 1px solid #e0e0e0; }
.mid { margin-left: 550px; }
.status { flex: none; display: flex; justify-content: flex-end; height: 21px; padding: 2px 55px 0 0; background: #fff; }
.status svg { width: 16px; height: 16px; }
.taskbar { flex: none; display: flex; height: 8px; overflow: hidden; background: #1f1c1c; color: #fff; }
.start { width: 48px; background: #252525; }
.find { width: 344px; background: #f0f0f0; }
.apps { width: 247px; background: #252525; }
.running { width: 48px; background: #4b4b4b; }
.rest { flex: 1; }
.taskbar time { padding-top: 2px; margin-right: 68px; font-size: 12px; line-height: 16px; }
.peek { width: 5px; border-left: 1px solid #888; }

.watermark { position: absolute; right: 14px; bottom: 13px; display: flex; gap: 9px; width: 269px; height: 82px; opacity: .95; pointer-events: none; }
.watermark > svg { width: 72px; height: 82px; }
.wmtext { display: flex; flex-direction: column; color: #fff; opacity: .5; white-space: nowrap; }
.wmtext strong { font-size: 41px; line-height: 60px; font-weight: 900; }
.wmtext span { font-size: 18px; line-height: 28px; font-weight: 700; }

.dialog { position: absolute; left: 8px; top: 8px; width: 328px; background: #f0f0f0; border-bottom: 1px solid #d6d6d6; border-right: 1px solid #d6d6d6; }
.dlgtitle { display: flex; align-items: center; gap: 8px; height: 24px; margin-right: -1px; padding: 0 9px 0 7px; background: #549fb8; color: #fff; font-size: 14px; }
.dlgtitle > svg { width: 14px; height: 14px; }
.dlgtitle button { margin-left: auto; }
.dlgtitle button svg { width: 12px; height: 12px; }
.dlgbody { padding: 10px 9px 9px 10px; }
.tabs { display: flex; margin: 0 2px; border: 1px solid #cfcfcf; border-bottom: 0; }
.tabs button { flex: 1; height: 27px; border-left: 1px solid #cfcfcf; }
.tabs button:first-child { border-left: 0; }
.lower button { flex: 65; }
.lower .wider { flex: 86; }
.lower .active { height: 30px; margin: -2px -1px -1px 0; background: #fff; border: 1px solid #bbb; border-bottom: 0; position: relative; }
.sheet { height: 538px; padding: 0 4px; background: #fff; border: 1px solid #bdbdbd; }
fieldset { min-width: 0; margin: 0; padding: 0 9px 9px 7px; border: 0; border-bottom: 1px solid #bcbcbc; }
fieldset.closed { padding-bottom: 0; }
.closed .head { margin-bottom: 0; }
.head { display: flex; align-items: center; justify-content: space-between; height: 26px; margin: 0 -5px 6px 0; padding-top: 4px; color: #00688b; font-size: 14px; }
.head .chev { margin: 0 2px 2px 0; }
.row { display: flex; align-items: center; justify-content: space-between; height: 25px; padding-left: 2px; color: #111; }
.row + .row { margin-top: 2px; }
.row.tall { height: 32px; }
.lamp { display: flex; align-items: center; justify-content: center; width: 32px; height: 32px; border: 1px solid #999; }
.lamp svg { width: 24px; height: 24px; }
.actions { display: flex; justify-content: flex-end; gap: 5px; padding: 12px 6px 0 0; }
.actions button { width: 54px; height: 25px; border: 1px solid #a5a5a5; background: #dcdcdc; }
.actions .ok { border-color: #74b3c8; background: #74b3c8; color: #fff; }
</style>
